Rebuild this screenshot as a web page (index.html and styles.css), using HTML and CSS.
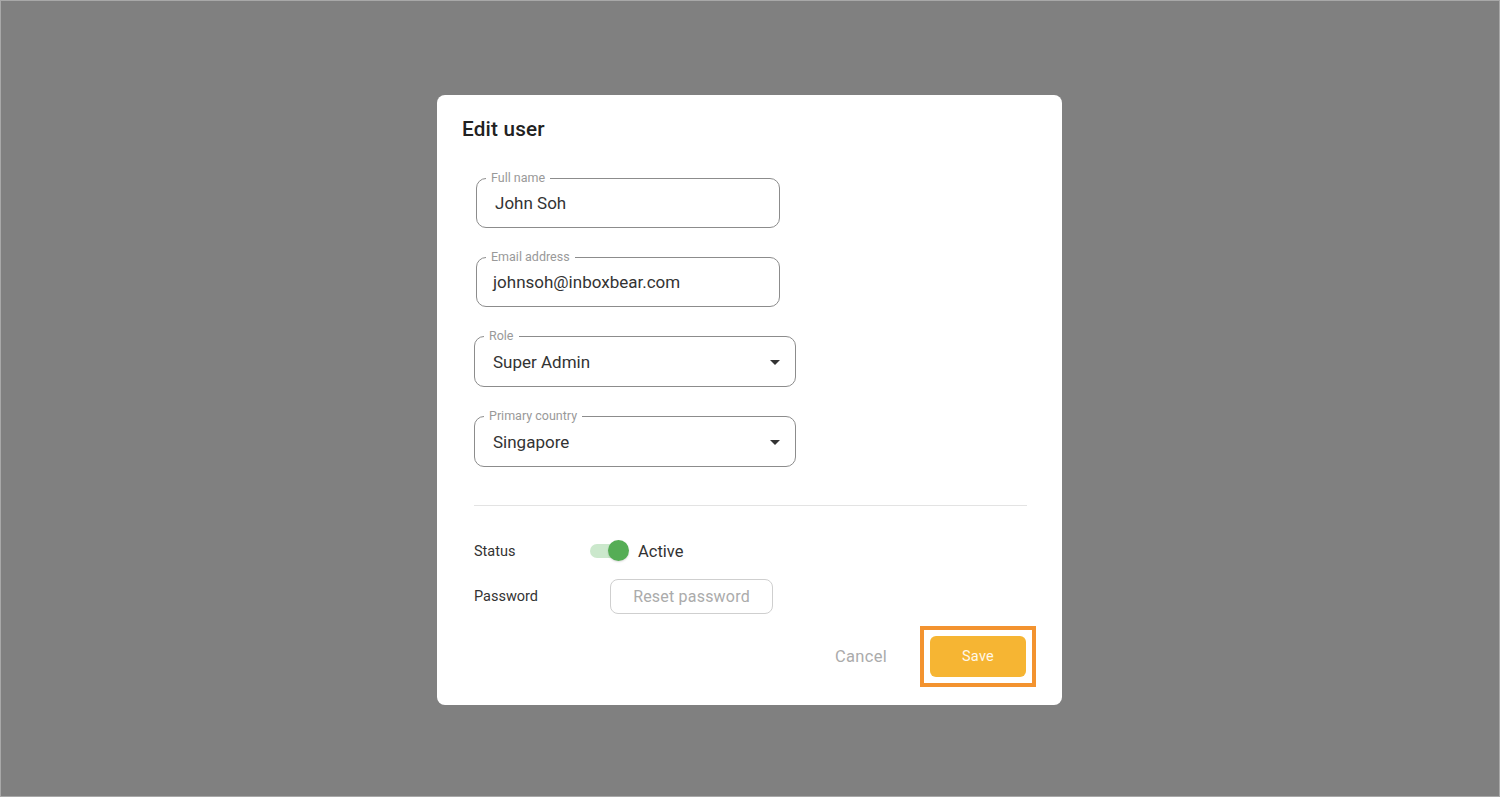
FILE: index.html
```html
<!DOCTYPE html>
<html lang="en">
<head>
<meta charset="utf-8">
<title>Edit user</title>
<link rel="stylesheet" href="styles.css">
</head>
<body>
<div class="backdrop">
  <div class="dialog">
    <h1 class="title">Edit user</h1>
    <div class="form">
      <div class="field field-short">
        <span class="label">Full name</span>
        <span class="value value-name">John Soh</span>
      </div>
      <div class="field field-short">
        <span class="label">Email address</span>
        <span class="value">johnsoh@inboxbear.com</span>
      </div>
      <div class="field field-select">
        <span class="label">Role</span>
        <span class="value value-select">Super Admin</span>
        <svg class="arrow" width="10" height="5" viewBox="0 0 10 5"><path d="M0 0h10L5 5z" fill="#333"/></svg>
      </div>
      <div class="field field-select">
        <span class="label">Primary country</span>
        <span class="value value-select">Singapore</span>
        <svg class="arrow" width="10" height="5" viewBox="0 0 10 5"><path d="M0 0h10L5 5z" fill="#333"/></svg>
      </div>
    </div>
    <hr class="divider">
    <div class="settings">
      <div class="row">
        <span class="row-label">Status</span>
        <span class="switch"><span class="track"></span><span class="thumb"></span></span>
        <span class="switch-text">Active</span>
      </div>
      <div class="row">
        <span class="row-label">Password</span>
        <button class="reset-btn">Reset password</button>
      </div>
    </div>
    <div class="actions">
      <button class="cancel-btn">Cancel</button>
      <span class="highlight"><button class="save-btn">Save</button></span>
    </div>
  </div>
</div>
</body>
</html>
```
FILE: styles.css
```css
html, body {
  margin: 0;
  padding: 0;
}
body {
  font-family: Roboto, "Liberation Sans", Arial, sans-serif;
  background: #808080;
}
.backdrop {
  box-sizing: border-box;
  width: 1500px;
  height: 797px;
  border: 1px solid #a8a8a8;
  background: #808080;
  display: flex;
  justify-content: center;
  align-items: flex-start;
  padding: 94px 1px 0 0;
}
.dialog {
  box-sizing: border-box;
  width: 625px;
  height: 610px;
  background: #fff;
  border-radius: 8px;
  padding: 22px 35px 0 25px;
  display: flex;
  flex-direction: column;
}
.title {
  margin: 0;
  font-size: 20.7px;
  line-height: 24px;
  font-weight: 500;
  color: #222;
  letter-spacing: 0.2px;
}
.form {
  margin-top: 37px;
  padding-left: 12px;
  display: flex;
  flex-direction: column;
  gap: 29px;
}
.field {
  position: relative;
  box-sizing: border-box;
  height: 50px;
  border: 1px solid #8c8c8c;
  border-radius: 10px;
  display: flex;
  align-items: center;
}
.field-short {
  width: 304px;
  margin-left: 2px;
}
.field-select {
  width: 322px;
  height: 51px;
  padding-right: 15px;
}
.label {
  position: absolute;
  top: -9px;
  left: 9px;
  padding: 0 5px;
  background: #fff;
  font-size: 12.5px;
  line-height: 16px;
  color: #999;
}
.value {
  padding-left: 16px;
  font-size: 17px;
  color: #333;
  flex: 1;
}
.value-name {
  padding-left: 18px;
}
.value-select {
  padding-left: 18px;
}
.arrow {
  display: block;
  margin-top: 1px;
}
.divider {
  margin: 38px 0 0 12px;
  border: 0;
  border-top: 1px solid #e3e3e3;
  height: 0;
}
.settings {
  margin-top: 27px;
  padding-left: 12px;
  display: flex;
  flex-direction: column;
  gap: 9px;
}
.row {
  height: 36px;
  display: flex;
  align-items: center;
}
.row-label {
  width: 116px;
  font-size: 14.5px;
  color: #333;
}
.switch {
  position: relative;
  width: 39px;
  height: 22px;
  display: flex;
  align-items: center;
}
.track {
  width: 34px;
  height: 14px;
  border-radius: 7px;
  background: #cbe8cc;
}
.thumb {
  position: absolute;
  left: 18px;
  top: 0;
  width: 21px;
  height: 21px;
  border-radius: 50%;
  background: #55ad55;
  box-shadow: 0 1px 2px rgba(0,0,0,0.15);
}
.switch-text {
  margin-left: 9px;
  font-size: 16.5px;
  color: #333;
}
.reset-btn {
  margin-left: 20px;
  box-sizing: border-box;
  width: 163px;
  height: 35px;
  border: 1px solid #cfcfcf;
  border-radius: 8px;
  background: #fff;
  font-family: inherit;
  font-size: 16px;
  letter-spacing: 0.2px;
  color: #ababab;
  padding: 0;
}
.actions {
  margin-top: 22px;
  display: flex;
  justify-content: flex-end;
  align-items: center;
}
.cancel-btn {
  border: 0;
  background: none;
  font-family: inherit;
  font-size: 16.5px;
  letter-spacing: 0.3px;
  color: #ababab;
  padding: 0;
  margin-right: 33px;
}
.highlight {
  display: flex;
  margin: -10px -9px -10px 0;
  padding: 6px;
  border: 4px solid #f3932f;
  background: #fff;
}
.save-btn {
  width: 96px;
  height: 41px;
  border: 0;
  border-radius: 6px;
  background: #f6b533;
  color: #fff8ea;
  font-family: inherit;
  font-size: 14.5px;
  letter-spacing: 0.3px;
  padding: 0;
}
```
